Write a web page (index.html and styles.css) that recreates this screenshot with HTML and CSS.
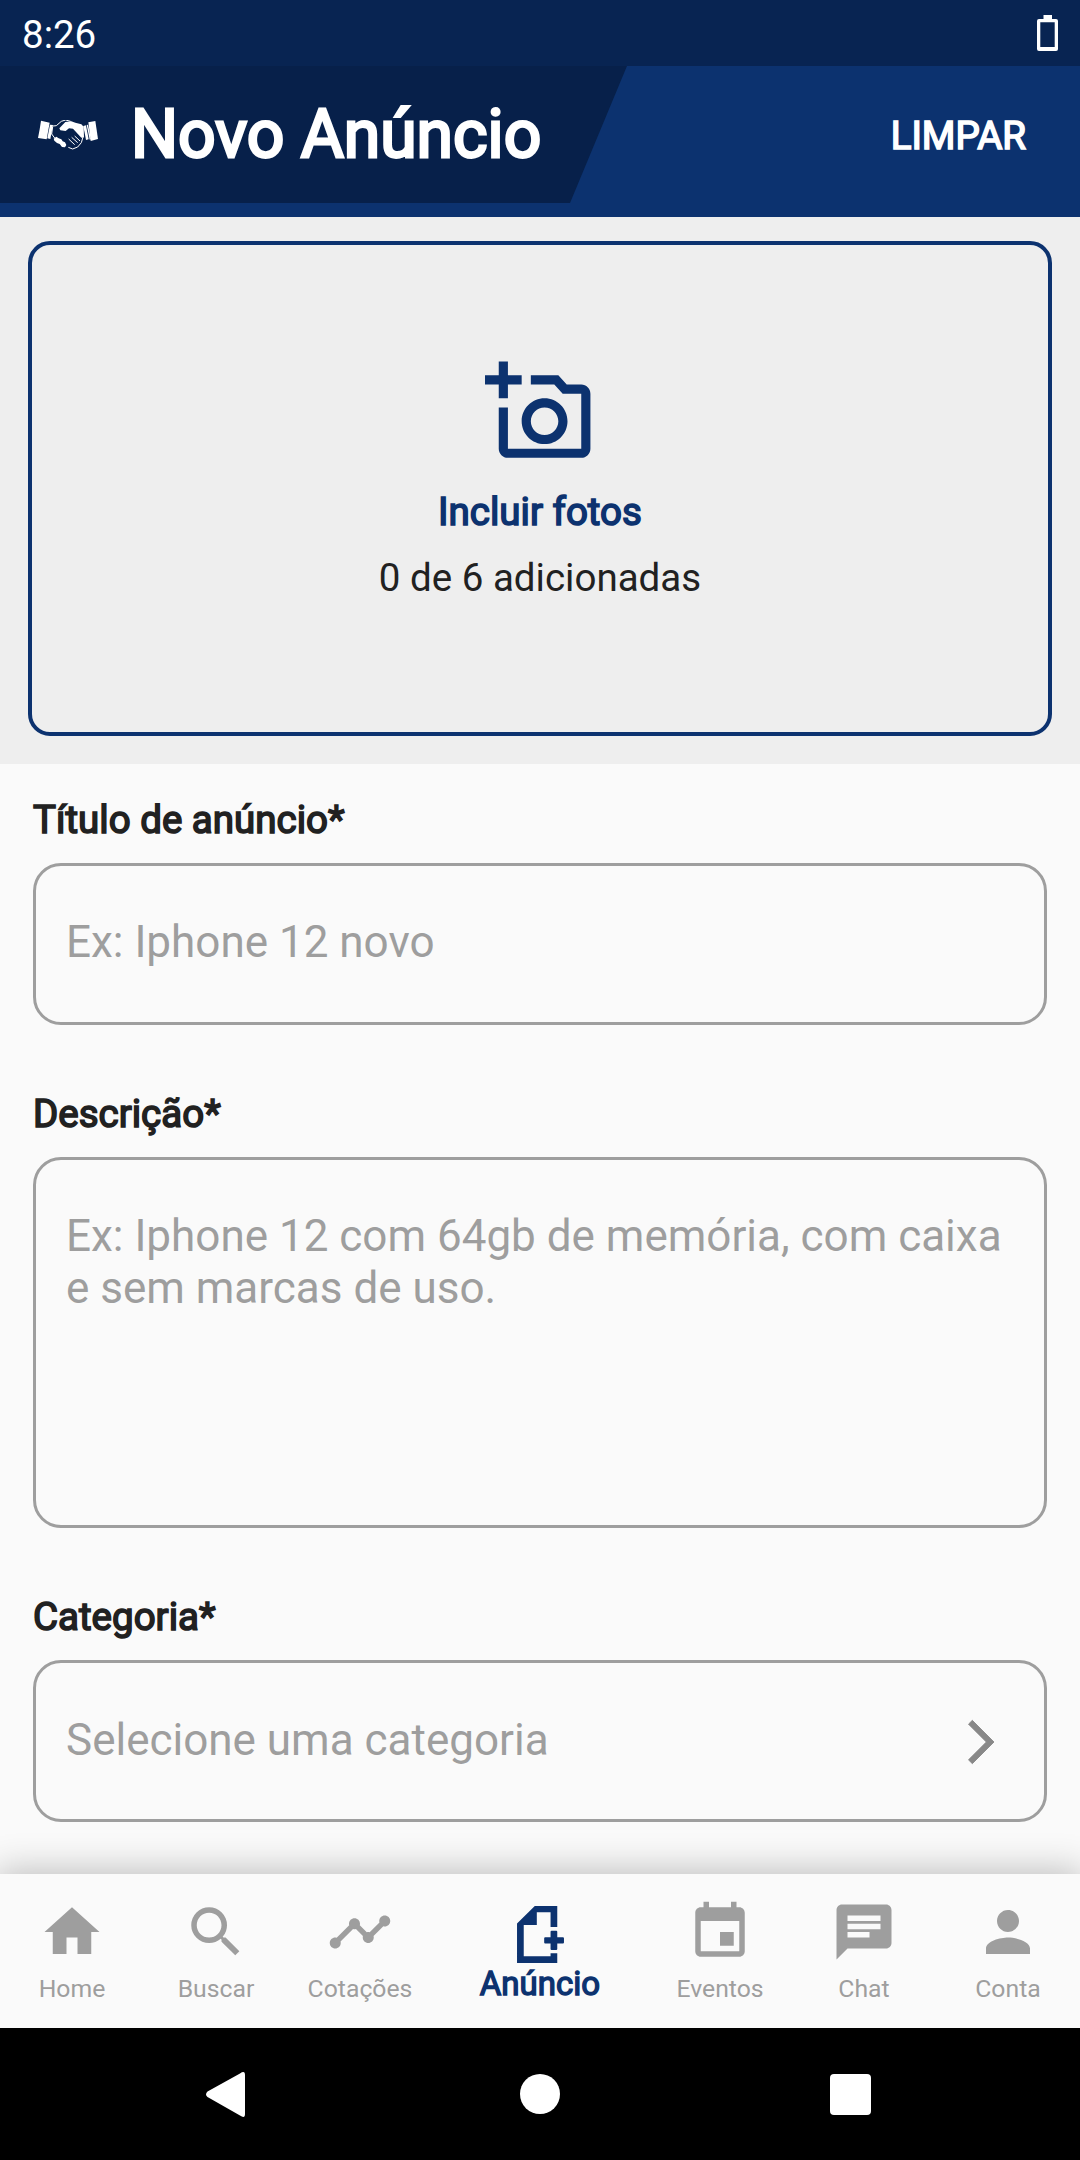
FILE: index.html
```html
<!DOCTYPE html>
<html lang="pt-BR">
<head>
    <meta charset="UTF-8">
    <meta name="viewport" content="width=device-width, initial-scale=1.0">
    <title>Novo Anúncio</title>
    <link rel="stylesheet" href="styles.css">
</head>
<body>
    <div class="status-bar">
        <span>8:26</span>
        <svg class="battery" viewBox="0 0 21 36">
            <path d="M6.5 0h8.5v4h4a2 2 0 0 1 2 2v28a2 2 0 0 1-2 2H2a2 2 0 0 1-2-2V6a2 2 0 0 1 2-2h4.500zM3.300 7.300v24.700h14.400V7.300z" fill-rule="evenodd"/>
        </svg>
    </div>

    <header class="header">
        <div class="header-title">
            <svg class="handshake" viewBox="55 57 180 90">
                <path d="M64 59l26 6-9 50-26-4 5-26z"/>
                <path d="M91 71l9 1-8 42-9-2z"/>
                <path d="M206 64l21-4 8 54-22 6z"/>
                <path d="M191 75l8-2 8 42-8 2z"/>
                <path d="M201 72l4-1 9 44-4 1z"/>
                <path d="M119 82l18-19 18-2 12 4 18 5 7 7 1 32-8 1-25-27-12-1-10 8-16-2z"/>
                <path d="M102 113l8-6 7 5 8 3 4 6 7 3 4 8-4 7-9-1-7-9-8-3-8-7z"/>
                <path class="line" d="M100 75l10-1 15-13 13-4 15 4M99 77l-3 22 9 12M190 108l-5 17-11 13-15 6-13-5M147 114l18 17M156 109l18 16M165 105l16 15"/>
            </svg>
            <h1>Novo Anúncio</h1>
        </div>
        <button class="clear" type="button">LIMPAR</button>
    </header>

    <main>
        <section class="photos">
            <div class="photo-box">
                <svg class="camera" viewBox="0 0 24 24">
                    <path d="M21 6h-3.170L16 4h-6v2h5.120l1.830 2H21v12H5v-9H3v9c0 1.100.900 2 2 2h16c1.100 0 2-.900 2-2V8c0-1.100-.900-2-2-2zM8 14c0 2.760 2.240 5 5 5s5-2.240 5-5-2.240-5-5-5-5 2.240-5 5zm5-3c1.650 0 3 1.350 3 3s-1.350 3-3 3-3-1.350-3-3 1.350-3 3-3zM5 6h3V4H5V1H3v3H0v2h3v3h2z"/>
                </svg>
                <strong>Incluir fotos</strong>
                <p>0 de 6 adicionadas</p>
            </div>
        </section>

        <form class="form">
            <label for="titulo">Título de anúncio*</label>
            <input class="field" id="titulo" type="text" placeholder="Ex: Iphone 12 novo">

            <label for="descricao">Descrição*</label>
            <textarea class="field description" id="descricao" placeholder="Ex: Iphone 12 com 64gb de memória, com caixa e sem marcas de uso."></textarea>

            <label>Categoria*</label>
            <div class="field category">
                <span>Selecione uma categoria</span>
                <svg viewBox="0 0 24 24"><path d="M6.230 20.230L8 22l10-10L8 2 6.230 3.770 14.460 12z"/></svg>
            </div>
        </form>
    </main>

    <nav class="tabs">
        <a class="tab">
            <svg viewBox="0 0 24 24"><path d="M10 20v-6h4v6h5v-8h3L12 3 2 12h3v8z"/></svg>
            <span>Home</span>
        </a>
        <a class="tab">
            <svg viewBox="0 0 24 24"><path d="M15.500 14h-.790l-.280-.270A6.471 6.471 0 0 0 16 9.500 6.500 6.500 0 1 0 9.500 16c1.610 0 3.090-.590 4.230-1.570l.270.280v.790l5 4.990L20.490 19l-4.990-5zm-6 0C7.010 14 5 11.990 5 9.500S7.010 5 9.500 5 14 7.010 14 9.500 11.990 14 9.500 14z"/></svg>
            <span>Buscar</span>
        </a>
        <a class="tab">
            <svg viewBox="0 0 24 24"><path d="M23 8c0 1.100-.900 2-2 2-.180 0-.350-.020-.510-.070l-3.560 3.550c.050.160.070.340.070.520 0 1.100-.900 2-2 2s-2-.900-2-2c0-.180.020-.360.070-.520l-2.550-2.550c-.160.050-.340.070-.520.070s-.360-.020-.520-.070l-4.550 4.560c.050.160.070.330.070.510 0 1.100-.900 2-2 2s-2-.900-2-2 .900-2 2-2c.180 0 .350.020.510.070l4.560-4.550C8.020 9.360 8 9.180 8 9c0-1.100.900-2 2-2s2 .900 2 2c0 .180-.020.360-.070.520l2.550 2.550c.160-.050.340-.070.520-.070s.360.020.520.070l3.550-3.560C19.020 8.350 19 8.180 19 8c0-1.100.900-2 2-2s2 .900 2 2z"/></svg>
            <span>Cotações</span>
        </a>
        <a class="tab active">
            <svg viewBox="0 0 140 170">
                <path d="M0 52L53 0h67v63h-20V19H59v38H20v93h80v-9h20v29H0z"/>
                <path d="M103 74h14q3 0 3 3v16h17q3 0 3 3v13q0 3-3 3h-17v16q0 3-3 3h-14q-3 0-3-3v-16H84q-3 0-3-3V96q0-3 3-3h16V77q0-3 3-3z"/>
            </svg>
            <span>Anúncio</span>
        </a>
        <a class="tab">
            <svg viewBox="0 0 24 24"><path d="M17 12h-5v5h5v-5zM16 1v2H8V1H6v2H5c-1.110 0-1.990.900-1.990 2L3 19c0 1.100.890 2 2 2h14c1.100 0 2-.900 2-2V5c0-1.100-.900-2-2-2h-1V1h-2zm3 18H5V8h14v11z"/></svg>
            <span>Eventos</span>
        </a>
        <a class="tab">
            <svg viewBox="0 0 24 24"><path d="M20 2H4c-1.100 0-1.990.900-1.990 2L2 22l4-4h14c1.100 0 2-.900 2-2V4c0-1.100-.900-2-2-2zM6 9h12v2H6V9zm8 5H6v-2h8v2zm4-6H6V6h12v2z"/></svg>
            <span>Chat</span>
        </a>
        <a class="tab">
            <svg viewBox="0 0 24 24"><path d="M12 12c2.210 0 4-1.790 4-4s-1.790-4-4-4-4 1.790-4 4 1.790 4 4 4zm0 2c-2.670 0-8 1.340-8 4v2h16v-2c0-2.660-5.330-4-8-4z"/></svg>
            <span>Conta</span>
        </a>
    </nav>

    <div class="system-nav">
        <svg viewBox="0 0 40 45"><path d="M1.500 19.500L34 1.500Q39 -2 39 3v39q0 5-5 1.500L1.500 25Q-1.500 22.500 1.500 19.500z"/></svg>
        <span class="circle"></span>
        <span class="square"></span>
    </div>
</body>
</html>
```
FILE: styles.css
```css
* {
    box-sizing: border-box;
}
body {
    margin: 0;
    width: 1080px;
    height: 2160px;
    overflow: hidden;
    display: flex;
    flex-direction: column;
    font-family: Roboto, sans-serif;
    font-size: 38.5px;
    line-height: 45px;
    color: #212121;
    background-color: #fafafa;
}
h1, p {
    margin: 0;
}
svg {
    display: block;
    fill: currentColor;
}

/* top */
.status-bar {
    display: flex;
    justify-content: space-between;
    height: 66px;
    padding: 12px 22px 0 22px;
    color: white;
    background-color: #082452;
}
.battery {
    width: 21px;
    height: 36px;
    margin-top: 3px;
}
.header {
    display: flex;
    justify-content: space-between;
    height: 151px;
    color: white;
    background-color: #0c326f;
}
.header-title {
    display: flex;
    align-items: center;
    width: 627px;
    height: 137px;
    padding-left: 38px;
    background-color: #07204a;
    clip-path: polygon(0 0, 100% 0, 570px 100%, 0 100%);
}
.handshake {
    width: 60px;
    height: 30px;
}
.handshake .line {
    fill: none;
    stroke: white;
    stroke-width: 3;
}
h1 {
    margin-left: 33px;
    font-size: 66px;
    line-height: 78px;
    font-weight: 400;
    -webkit-text-stroke: 2.8px;
}
.clear {
    height: 137px;
    padding: 2px 54px 0 0;
    border: 0;
    background: none;
    font: inherit;
    color: white;
    -webkit-text-stroke: 1.6px;
}

/* photos */
.photos {
    height: 547px;
    padding: 24px 28px 0;
    background-color: #eeeeee;
}
.photo-box {
    display: flex;
    flex-direction: column;
    align-items: center;
    height: 495px;
    padding-top: 112px;
    border: 4px solid #0c326f;
    border-radius: 22px;
}
.camera {
    width: 110px;
    height: 110px;
    color: #0c326f;
}
.photo-box strong {
    margin-top: 22px;
    font-weight: 400;
    color: #0c326f;
    -webkit-text-stroke: 1.6px;
}
.photo-box p {
    margin-top: 21px;
}

/* form */
.form {
    display: flex;
    flex-direction: column;
    height: 1110px;
    padding: 33px 33px 0;
}
.form label {
    margin-bottom: 21px;
    -webkit-text-stroke: 1.6px;
}
.field {
    flex-shrink: 0;
    height: 162px;
    margin: 0 0 66px;
    padding: 51px 30px 55px;
    border: 3px solid #9e9e9e;
    border-radius: 28px;
    outline: none;
    resize: none;
    background: none;
    font-family: inherit;
    font-size: 44px;
    line-height: 52px;
    color: #9e9e9e;
}
.field::placeholder {
    color: #9e9e9e;
    opacity: 1;
}
.description {
    height: 371px;
    padding-top: 50px;
}
.category {
    display: flex;
    justify-content: space-between;
    margin-bottom: 0;
}
.category svg {
    width: 52px;
    height: 52px;
    margin: 2px 7px 0 0;
    color: #888;
    stroke: currentColor;
    stroke-width: 0.4;
}

/* bottom tabs */
.tabs {
    display: flex;
    height: 154px;
    background-color: #fafafa;
    box-shadow: 0 0 34px 4px rgba(0, 0, 0, 0.24);
}
.tab {
    flex: 1;
    display: flex;
    flex-direction: column;
    align-items: center;
    padding-top: 25px;
    font-size: 24.75px;
    line-height: 29px;
    color: #9e9e9e;
}
.tab svg {
    width: 66px;
    height: 66px;
}
.tab span {
    margin-top: 9px;
}
.tab.active {
    flex: 1.5;
    padding-top: 32px;
    font-size: 33px;
    line-height: 39px;
    color: #0c326f;
    -webkit-text-stroke: 1.4px;
}
.tab.active svg {
    width: 47px;
    height: 57px;
}
.tab.active span {
    margin-top: 1px;
}

/* system buttons */
.system-nav {
    position: relative;
    display: flex;
    justify-content: space-between;
    align-items: center;
    height: 132px;
    padding: 0 209px 0 206px;
    color: white;
    background-color: black;
}
.system-nav svg {
    width: 40px;
    height: 45px;
}
.circle {
    width: 40px;
    height: 40px;
    margin-left: 3px;
    border-radius: 50%;
    background-color: white;
}
.square {
    width: 41px;
    height: 41px;
    border-radius: 4px;
    background-color: white;
}
```
